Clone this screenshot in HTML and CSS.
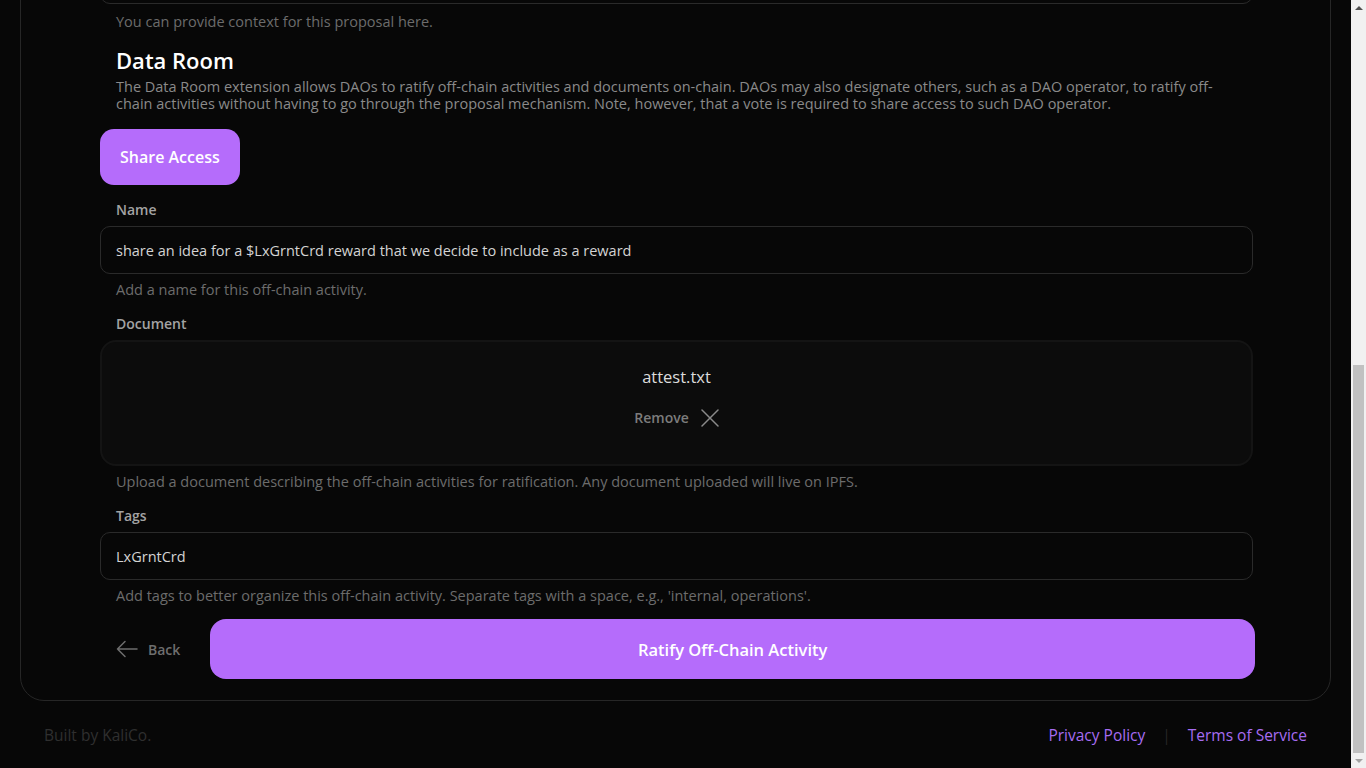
FILE: index.html
```html
<!DOCTYPE html>
<html lang="en">
<head>
  <meta charset="UTF-8">
  <title>KaliCo - Data Room</title>
  <meta name="viewport" content="width=device-width, initial-scale=1.0">
  <link rel="stylesheet" href="styles.css">
</head>
<body>

  <div class="viewport">
    <main class="page">
      <section class="card">
        <form class="form">
          <div class="field">
            <div class="editor"></div>
            <p class="hint">You can provide context for this proposal here.</p>
          </div>

          <div class="extension">
            <h2>Data Room</h2>
            <p>The Data Room extension allows DAOs to ratify off-chain activities and documents on-chain. DAOs may also designate others, such as a DAO operator, to ratify off-chain activities without having to go through the proposal mechanism. Note, however, that a vote is required to share access to such DAO operator.</p>
          </div>

          <button type="button" class="share">Share Access</button>

          <div class="field">
            <label class="label">Name</label>
            <div class="input">share an idea for a $LxGrntCrd reward that we decide to include as a reward</div>
            <p class="hint">Add a name for this off-chain activity.</p>
          </div>

          <div class="field">
            <label class="label">Document</label>
            <div class="dropzone">
              <div class="file-name">attest.txt</div>
              <div class="remove">
                Remove
                <svg width="18" height="18" viewBox="0 0 18 18" fill="none" stroke="#8a8a8a" stroke-width="1.5" stroke-linecap="round">
                  <path d="M1 1 L17 17 M17 1 L1 17"/>
                </svg>
              </div>
            </div>
            <p class="hint">Upload a document describing the off-chain activities for ratification. Any document uploaded will live on IPFS.</p>
          </div>

          <div class="field">
            <label class="label">Tags</label>
            <div class="input">LxGrntCrd</div>
            <p class="hint">Add tags to better organize this off-chain activity. Separate tags with a space, e.g., 'internal, operations'.</p>
          </div>

          <div class="actions">
            <a class="back" href="#">
              <svg width="22" height="18" viewBox="0 0 22 18" fill="none" stroke="#6e6e6e" stroke-width="1.5" stroke-linecap="round" stroke-linejoin="round">
                <path d="M21 9 H1.5 M9 1.5 L1.5 9 L9 16.5"/>
              </svg>
              Back
            </a>
            <button type="button" class="ratify">Ratify Off-Chain Activity</button>
          </div>
        </form>
      </section>

      <footer class="footer">
        <span class="built">Built by KaliCo.</span>
        <nav class="links">
          <a href="#">Privacy Policy</a>
          <span class="sep">|</span>
          <a href="#">Terms of Service</a>
        </nav>
      </footer>
    </main>
  </div>

  <aside class="scrollbar">
    <span class="arrow up"></span>
    <div class="track"><div class="thumb"></div></div>
    <span class="arrow down"></span>
  </aside>

</body>
</html>
```

FILE: styles.css
```css
* {
  box-sizing: border-box;
}

body {
  margin: 0;
  height: 100vh;
  display: flex;
  overflow: hidden;
  background: #070707;
  font-family: 'Open Sans', 'Liberation Sans', sans-serif;
  color: #d6d6d6;
}

/* page is shown scrolled to the bottom */
.viewport {
  flex: 1;
  display: flex;
  flex-direction: column;
  justify-content: flex-end;
  overflow: hidden;
}

.scrollbar {
  width: 15px;
  flex-shrink: 0;
  display: flex;
  flex-direction: column;
  background: #f1f1f1;
}

.arrow {
  height: 15px;
  display: flex;
  align-items: center;
  justify-content: center;
}

.arrow::before {
  content: '';
  width: 0;
  height: 0;
  border-left: 4px solid transparent;
  border-right: 4px solid transparent;
}

.arrow.up::before {
  border-bottom: 4px solid #505050;
}

.arrow.down::before {
  border-top: 4px solid #a3a3a3;
}

.track {
  flex: 1;
  display: flex;
  flex-direction: column;
  justify-content: flex-end;
  padding: 0 2px;
}

.thumb {
  height: 388px;
  background: #c1c1c1;
}

.page {
  flex-shrink: 0;
  padding: 20px 20px 0;
}

.card {
  border: 1px solid #262626;
  border-radius: 24px;
  padding: 40px 77px 21px 79px;
}

.form {
  display: flex;
  flex-direction: column;
  gap: 14px;
}

.field {
  display: flex;
  flex-direction: column;
  gap: 6px;
}

.label {
  padding: 0 16px;
  font-size: 14px;
  line-height: 20px;
  font-weight: 600;
  color: #a3a3a3;
}

.input {
  height: 48px;
  display: flex;
  align-items: center;
  padding: 0 15px;
  border: 1px solid #2a2a2a;
  border-radius: 10px;
  font-size: 14.5px;
  color: #d4d4d4;
}

.hint {
  margin: 0;
  padding: 0 16px;
  font-size: 14.5px;
  line-height: 20px;
  color: #6c6c6c;
}

.editor {
  height: 620px;
  border: 1px solid #2a2a2a;
  border-radius: 10px;
}

.field:first-child .hint {
  margin-top: 2px;
}

.extension {
  padding: 0 16px;
  margin-top: -2px;
  margin-bottom: 3px;
}

.extension h2 {
  margin: 0;
  font-size: 22px;
  line-height: 32px;
  font-weight: 600;
  color: #fff;
}

.extension p {
  margin: 2px 0 0;
  font-size: 14.5px;
  line-height: 17px;
  color: #8a8a8a;
}

button {
  font-family: inherit;
  border: none;
  cursor: pointer;
  color: #fff;
  background: #b56cfb;
}

.share {
  align-self: flex-start;
  height: 56px;
  padding: 0 20px;
  margin-bottom: 1px;
  border-radius: 14px;
  font-size: 16px;
  font-weight: 600;
}

.dropzone {
  height: 126px;
  display: flex;
  flex-direction: column;
  align-items: center;
  gap: 17px;
  padding-top: 23px;
  background: #0c0c0c;
  border: 2px solid #141414;
  border-radius: 16px;
}

.file-name {
  font-size: 16.5px;
  line-height: 24px;
  color: #dcdcdc;
}

.remove {
  display: flex;
  align-items: center;
  gap: 12px;
  font-size: 14px;
  line-height: 24px;
  font-weight: 600;
  color: #7c7c7c;
}

.actions {
  display: flex;
  align-items: center;
  gap: 30px;
  margin-top: -1px;
  padding-left: 16px;
  margin-right: -2px;
}

.back {
  display: flex;
  align-items: center;
  gap: 10px;
  font-size: 14px;
  font-weight: 600;
  color: #6e6e6e;
  text-decoration: none;
}

.ratify {
  flex: 1;
  height: 60px;
  border-radius: 16px;
  font-size: 16.5px;
  font-weight: 600;
}

.footer {
  display: flex;
  justify-content: space-between;
  align-items: center;
  padding: 22px 24px 21px;
  font-size: 15.5px;
  line-height: 24px;
}

.built {
  color: #2f2f2f;
}

.links {
  display: flex;
  align-items: center;
  gap: 17px;
}

.links a {
  color: #a66cf2;
  text-decoration: none;
}

.sep {
  color: #262626;
}
```
